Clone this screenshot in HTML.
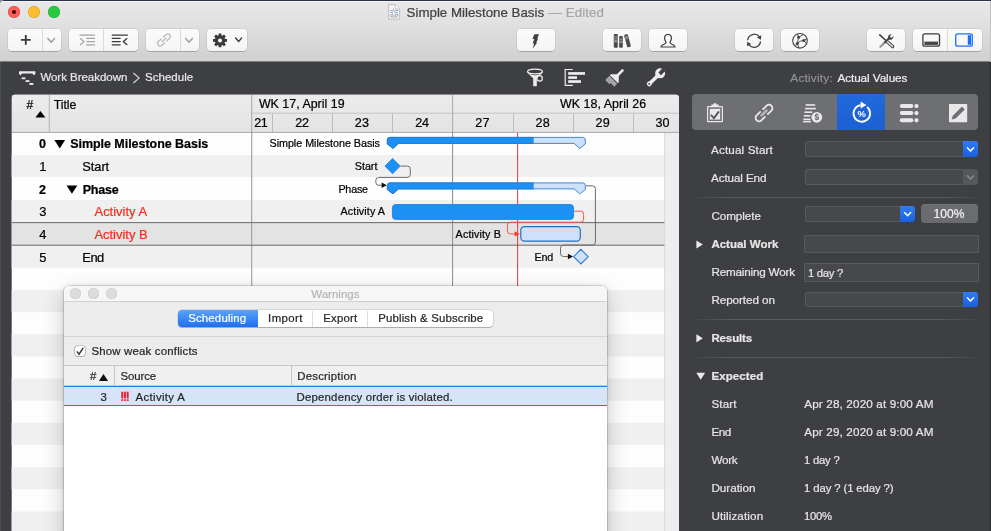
<!DOCTYPE html>
<html><head><meta charset="utf-8"><title>Simple Milestone Basis</title>
<style>
html,body{margin:0;padding:0}
body{width:991px;height:531px;overflow:hidden;position:relative;background:#3e3f43;font-family:"Liberation Sans",sans-serif}
.t{position:absolute;white-space:pre;line-height:20px;height:20px;-webkit-text-stroke:0.22px}
#txt{position:absolute;left:0;top:0;width:991px;height:531px;will-change:transform}
.abs{position:absolute}
#tb{left:0;top:0;width:991px;height:61px;background:linear-gradient(#e8e8e8,#e2e2e2 33%,#d0d0d0);border-bottom:1px solid #7e7e81;box-sizing:content-box}
.btn{position:absolute;top:29px;height:22px;background:linear-gradient(#fbfbfb,#f5f5f5);border-radius:4px;box-shadow:0 0 0 0.5px rgba(0,0,0,.13),0 0.8px 0.6px rgba(0,0,0,.24)}
.sep{position:absolute;top:0;width:1px;height:22px;background:#dadada}
.fld{position:absolute;background:#47484c;border:1px solid #58595d;box-sizing:border-box}
.pop{position:absolute;width:14.5px;background:linear-gradient(#2f7bf0,#1a5fe0);border-radius:0 3px 3px 0}
.hr{position:absolute;left:694px;width:283px;height:1px;background:linear-gradient(90deg,#434448,#58595d 12%,#58595d 88%,#434448)}
svg{position:absolute;overflow:visible}
</style></head><body>
<div id="tb" class="abs"></div>
<div class="abs" style="left:0;top:0;width:991px;height:1px;background:#27324a"></div><div class="abs" style="left:0;top:1px;width:991px;height:1px;background:#f5f5f5"></div>
<svg width="6" height="6" style="left:0;top:0"><path d="M0,0H4Q0.5,1.2 0,4Z" fill="#8a8f99"/></svg>
<div class="abs" style="left:990px;top:1px;width:1px;height:61px;background:#c2c2c2"></div>
<div class="abs" style="left:990px;top:62px;width:1px;height:469px;background:#2b2c2f"></div><div class="abs" style="left:989px;top:62px;width:1px;height:469px;background:#38393d"></div>
<div class="abs" style="left:0;top:62px;width:1px;height:469px;background:#4e4f53"></div>
<div class="abs" style="left:8px;top:6px;width:12px;height:12px;border-radius:6px;background:#fc5f57;box-shadow:inset 0 0 0 0.5px #e0443e"></div>
<div class="abs" style="left:28px;top:6px;width:12px;height:12px;border-radius:6px;background:#fdbc2e;box-shadow:inset 0 0 0 0.5px #dea123"></div>
<div class="abs" style="left:48px;top:6px;width:12px;height:12px;border-radius:6px;background:#28c840;box-shadow:inset 0 0 0 0.5px #1aab29"></div>
<div class="abs" style="left:12px;top:10px;width:4px;height:4px;border-radius:2px;background:#4d0000"></div>
<svg width="991" height="24" viewBox="0 0 991 24" style="left:0;top:0"><path d="M388.7,4.5H395.6L399.6,8.6V19.1H388.7Z" fill="#f5f5f5" stroke="#b9b9b9" stroke-width="0.9"/><path d="M395.4,4.6V8.8H399.5" fill="#fcfcfc" stroke="#bdbdbd" stroke-width="0.8"/><path d="M390.2,10.4H391.6M395.2,10.4H398.2M390.6,12.4H392M395.8,12.4H397.6M397,14.4H398.2" stroke="#4a90e0" stroke-width="0.9" fill="none"/><ellipse cx="394" cy="15.7" rx="3.9" ry="1.4" fill="#f8f8f8" stroke="#8c8c8c" stroke-width="0.8"/><path d="M392.2,15.4L393.3,8.8L395.8,15.4Z" fill="#fafafa" stroke="#9a9a9a" stroke-width="0.6"/></svg>
<div class="btn" style="left:8.0px;width:53.3px"><div class="sep" style="left:34.0px"></div></div>
<div class="btn" style="left:68.6px;width:69.6px"><div class="sep" style="left:34.4px"></div></div>
<div class="btn" style="left:145.6px;width:53.7px"><div class="sep" style="left:34.4px"></div></div>
<div class="btn" style="left:207.0px;width:40.2px"></div>
<div class="btn" style="left:516.8px;width:38.6px"></div>
<div class="btn" style="left:602.6px;width:38.9px"></div>
<div class="btn" style="left:648.5px;width:38.9px"></div>
<div class="btn" style="left:734.6px;width:38.8px"></div>
<div class="btn" style="left:780.5px;width:38.8px"></div>
<div class="btn" style="left:866.7px;width:38.5px"></div>
<div class="btn" style="left:912.7px;width:69.7px"><div class="sep" style="left:34.3px"></div></div>
<svg width="991" height="62" viewBox="0 0 991 62" style="left:0;top:0">
<path d="M20.9,39.9H30.7M25.8,35V44.8" stroke="#3b3b3b" stroke-width="1.9" fill="none"/>
<path d="M47.900000000000006,38.4L51.2,42.199999999999996L54.5,38.4" stroke="#a0a0a0" stroke-width="1.6" fill="none" stroke-linecap="round" stroke-linejoin="round"/>
<path d="M79.5,35.1H95.1M86.3,38.4H95.1M86.3,41.6H95.1M86.3,44.9H95.1" stroke="#a2a2a2" stroke-width="1.1" fill="none"/><path d="M80.2,38.2L83.8,41.6L80.2,45" stroke="#a2a2a2" stroke-width="1.2" fill="none"/>
<path d="M111.8,35.1H127.9M111.8,38.4H120.6M111.8,41.6H120.6M111.8,44.9H120.6" stroke="#3b3b3b" stroke-width="1.2" fill="none"/><path d="M127.2,38.2L123.4,41.6L127.2,45" stroke="#3b3b3b" stroke-width="1.4" fill="none"/>
<g transform="translate(164,39.9) rotate(-42) scale(0.74)" fill="none" stroke="#b8b8b8" stroke-width="1.6" stroke-linecap="round"><path d="M-2,-3.4H-7A3.4,3.4 0 0,0 -7,3.4H-2"/><path d="M2,-3.4H7A3.4,3.4 0 0,1 7,3.4H2"/><path d="M-4.2,0H4.2" stroke-width="2.4000000000000004" stroke-linecap="butt" opacity="0.75"/></g>
<path d="M185.7,38.4L189,42.199999999999996L192.3,38.4" stroke="#a4a4a4" stroke-width="1.6" fill="none" stroke-linecap="round" stroke-linejoin="round"/>
<path d="M226.97,39.06L226.97,41.74L224.86,41.96L224.53,42.73L225.88,44.38L223.98,46.28L222.33,44.93L221.56,45.26L221.34,47.37L218.66,47.37L218.44,45.26L217.67,44.93L216.02,46.28L214.12,44.38L215.47,42.73L215.14,41.96L213.03,41.74L213.03,39.06L215.14,38.84L215.47,38.07L214.12,36.42L216.02,34.52L217.67,35.87L218.44,35.54L218.66,33.43L221.34,33.43L221.56,35.54L222.33,35.87L223.98,34.52L225.88,36.42L224.53,38.07L224.86,38.84ZM222.0,40.4A2.0,2.0 0 1,0 218.0,40.4A2.0,2.0 0 1,0 222.0,40.4Z" fill="#3b3b3b" fill-rule="evenodd"/>
<path d="M235.6,38.0L238.6,41.599999999999994L241.6,38.0" stroke="#3b3b3b" stroke-width="1.4" fill="none" stroke-linecap="round" stroke-linejoin="round"/>
<path d="M534.3,34.2H539L537.3,38.6H538.1L536.2,43.1H537L532.5,48.7L534.2,43.6H532.6L534.3,39H532.5Z" fill="#404040"/>
<rect x="613.8" y="34.1" width="4" height="13.6" rx="1" fill="#4a4a4a"/><rect x="613.8" y="36.4" width="4" height="1" fill="#9a9a9a"/><rect x="613.8" y="38.4" width="4" height="1" fill="#9a9a9a"/><rect x="613.8" y="40" width="4" height="2.6" fill="#8a8a8a"/><rect x="619.1" y="36.1" width="3.7" height="11.6" rx="1" fill="#4a4a4a"/><rect x="619.1" y="38.6" width="3.7" height="1" fill="#9a9a9a"/><rect x="619.1" y="40.6" width="3.7" height="2.6" fill="#8a8a8a"/><g transform="translate(623.9,34.9) rotate(-15.5)"><rect x="0" y="0" width="3.8" height="13.2" rx="1" fill="#4a4a4a"/><rect x="0" y="1.6" width="3.8" height="3.4" fill="#858585"/></g>
<path d="M668,34.4C670.6,34.4 671.6,36.4 671.4,38.6C671.2,40.4 670.4,41.4 670,42.3C669.8,43.4 671.2,44 673,44.7C674.6,45.3 675,46 675,47H661C661,46 661.4,45.3 663,44.7C664.8,44 666.2,43.4 666,42.3C665.6,41.4 664.8,40.4 664.6,38.6C664.4,36.4 665.4,34.4 668,34.4Z" fill="none" stroke="#3b3b3b" stroke-width="1.2"/>
<g fill="none" stroke="#444" stroke-width="1.3"><path d="M747.7,40.2A6.5,6.5 0 0,1 759.4,36.9"/><path d="M760.5,41.4A6.5,6.5 0 0,1 748.8,44.7"/></g><path d="M761.3,35.3L760.9,39.8L756.9,37.6Z" fill="#444"/><path d="M746.9,46.3L747.3,41.8L751.3,44Z" fill="#444"/>
<g fill="none" stroke="#444" stroke-width="1.1"><circle cx="800" cy="40.8" r="7.3"/><path d="M798.6,37.2L797.3,43.6M797.3,43.6Q799.6,40.4 803.8,40.5M798.6,37.2L797.6,34M798.6,37.2L803.4,34.6M803.8,40.5L807,38.6M803.8,40.5L806.6,43.8M797.3,43.6L794.8,45.8M797.3,43.6L799,48" stroke-width="0.9"/></g><circle cx="798.6" cy="37.2" r="1.5" fill="#444"/><circle cx="803.8" cy="40.5" r="1.6" fill="#444"/><circle cx="797.3" cy="43.6" r="1.5" fill="#444"/>
<g fill="none" stroke-linecap="round"><path d="M880.4,46.8L884.6,42.6" stroke="#9c9c9c" stroke-width="2.3"/><path d="M884.8,42.4L888.8,38.4" stroke="#444" stroke-width="2"/><path d="M879.7,34.9L886.2,40.8" stroke="#3a3a3a" stroke-width="1.5"/><path d="M887.2,41.7L892.6,46.6" stroke="#444" stroke-width="3.4"/><path d="M887.4,41.9L892.4,46.4" stroke="#d8d8d8" stroke-width="1.5"/></g><path d="M888.2,38.9A3.3,3.3 0 0,1 891.6,34.3L889.8,36.4L891.3,37.9L893.4,36.1A3.3,3.3 0 0,1 888.8,39.5Z" fill="#444"/>
<rect x="922.9" y="33.8" width="16.6" height="12.4" rx="2" fill="none" stroke="#3b3b3b" stroke-width="1.3"/><rect x="924.4" y="41.6" width="13.6" height="3.3" fill="#444"/>
<rect x="955.7" y="33.8" width="16.6" height="12.4" rx="2" fill="none" stroke="#1a6ff5" stroke-width="1.3"/><rect x="967.8" y="35.2" width="3.2" height="9.6" fill="#1a6ff5"/>
</svg>
<svg id="main" width="991" height="531" viewBox="0 0 991 531" style="left:0;top:0">
<defs><linearGradient id="hg" x1="0" y1="0" x2="0" y2="1"><stop offset="0" stop-color="#ececec"/><stop offset="1" stop-color="#e3e3e3"/></linearGradient><clipPath id="tc"><path d="M11.7,531V97.7Q11.7,94.7 14.7,94.7H675.9Q678.9,94.7 678.9,97.7V531Z"/></clipPath></defs>
<g clip-path="url(#tc)">
<rect x="11" y="94" width="668" height="437" fill="#fdfdfd"/>
<rect x="11" y="155.10" width="653.4" height="21.85" fill="#f0f0f0"/>
<rect x="11" y="200.00" width="653.4" height="22.60" fill="#f0f0f0"/>
<rect x="11" y="222.60" width="653.4" height="22.60" fill="#e3e3e3"/>
<rect x="11" y="245.20" width="653.4" height="22.60" fill="#f0f0f0"/>
<rect x="11" y="289.95" width="653.4" height="22.15" fill="#f0f0f0"/>
<rect x="11" y="334.25" width="653.4" height="22.15" fill="#f0f0f0"/>
<rect x="11" y="378.55" width="653.4" height="22.15" fill="#f0f0f0"/>
<rect x="11" y="422.85" width="653.4" height="22.15" fill="#f0f0f0"/>
<rect x="11" y="467.15" width="653.4" height="22.15" fill="#f0f0f0"/>
<rect x="11" y="511.45" width="653.4" height="22.15" fill="#f0f0f0"/>
<rect x="664.2" y="132.4" width="15" height="400" fill="#eeeeee"/><rect x="664.2" y="132.4" width="1" height="400" fill="#d9d9d9"/>
<rect x="12" y="94" width="667" height="38.4" fill="url(#hg)"/>
<rect x="12" y="131.9" width="667" height="1" fill="#a9a9a9"/>
<rect x="252" y="112.7" width="427" height="1" fill="#c4c4c4"/>
<rect x="48.8" y="94" width="1" height="38" fill="#b4b4b4"/>
<rect x="272" y="113.5" width="1" height="18.5" fill="#bcbcbc"/>
<rect x="332" y="113.5" width="1" height="18.5" fill="#bcbcbc"/>
<rect x="392" y="113.5" width="1" height="18.5" fill="#bcbcbc"/>
<rect x="513" y="113.5" width="1" height="18.5" fill="#bcbcbc"/>
<rect x="573" y="113.5" width="1" height="18.5" fill="#bcbcbc"/>
<rect x="633" y="113.5" width="1" height="18.5" fill="#bcbcbc"/>
<rect x="452.1" y="94" width="1" height="38" fill="#a8a8a8"/><rect x="452.1" y="132" width="1" height="400" fill="#8c8c8c"/>
<rect x="251.2" y="94" width="1" height="38" fill="#a4a4a4"/><rect x="251.2" y="132" width="1" height="400" fill="#979797"/>
<rect x="11" y="222.05" width="653.4" height="1.1" fill="#747474"/>
<rect x="11" y="244.65" width="653.4" height="1.1" fill="#747474"/>
<rect x="517.1" y="132.9" width="1" height="400" fill="#df3a3c"/>
</g>
<clipPath id="c137"><rect x="380" y="135.4" width="153.7" height="20"/></clipPath><path d="M389.90000000000003,137.4H582.6999999999999Q585.3,137.4 585.3,140.0V144.0L579.5999999999999,148.4L574.0999999999999,143.4H398.5L393.0,148.4L387.3,144.0V140.0Q387.3,137.4 389.90000000000003,137.4Z" fill="#cfe0fa" stroke="#2a7fd6" stroke-width="0.9"/><path d="M389.90000000000003,137.4H582.6999999999999Q585.3,137.4 585.3,140.0V144.0L579.5999999999999,148.4L574.0999999999999,143.4H398.5L393.0,148.4L387.3,144.0V140.0Q387.3,137.4 389.90000000000003,137.4Z" fill="#1d90f5" stroke="#1b7ad6" stroke-width="0.8" clip-path="url(#c137)"/>
<clipPath id="c182"><rect x="380" y="180.9" width="153.7" height="20"/></clipPath><path d="M389.90000000000003,182.9H582.6999999999999Q585.3,182.9 585.3,185.5V189.5L579.5999999999999,193.9L574.0999999999999,188.9H398.5L393.0,193.9L387.3,189.5V185.5Q387.3,182.9 389.90000000000003,182.9Z" fill="#cfe0fa" stroke="#2a7fd6" stroke-width="0.9"/><path d="M389.90000000000003,182.9H582.6999999999999Q585.3,182.9 585.3,185.5V189.5L579.5999999999999,193.9L574.0999999999999,188.9H398.5L393.0,193.9L387.3,189.5V185.5Q387.3,182.9 389.90000000000003,182.9Z" fill="#1d90f5" stroke="#1b7ad6" stroke-width="0.8" clip-path="url(#c182)"/>
<path d="M400.6,166.1H407.3Q410.3,166.1 410.3,169.1V174.4Q410.3,177.4 407.3,177.4H378.8Q375.8,177.4 375.8,180.4V182.3Q375.8,185.3 378.8,185.3H383" fill="none" stroke="#6a6a6a" stroke-width="1"/>
<path d="M386.8,185.3L381.6,182.6V188Z" fill="#111"/>
<path d="M585.7,185.8H592.4Q595.4,185.8 595.4,188.8V242.1Q595.4,245.1 592.4,245.1H563.5Q560.5,245.1 560.5,248.1V253.5Q560.5,256.5 563.5,256.5H568.5" fill="none" stroke="#6a6a6a" stroke-width="1"/>
<path d="M573.1,256.5L567.9,253.8V259.2Z" fill="#111"/>
<path d="M574,211.2H580.6Q583.6,211.2 583.6,214.2V219.2Q583.6,222.2 580.6,222.2H510.4Q507.4,222.2 507.4,225.2V230.9Q507.4,233.9 510.4,233.9H515" fill="none" stroke="#f4574a" stroke-width="1"/>
<path d="M519.8,233.9L514.6,231.2V236.6Z" fill="#f5392f"/>
<path d="M392.6,158.4L400.3,166.1L392.6,173.8L384.9,166.1Z" fill="#1d90f5" stroke="#1b7ad6" stroke-width="0.7"/>
<rect x="392.4" y="204.5" width="181.2" height="14.9" rx="3.4" fill="#1d90f5" stroke="#1b7ad6" stroke-width="0.8"/>
<rect x="520.8" y="226.6" width="59.5" height="14.5" rx="3.6" fill="#cfe0fa" stroke="#1f72c4" stroke-width="1.2"/>
<path d="M580.9,249.4L588.2,256.7L580.9,264L573.6,256.7Z" fill="#cfe0fa" stroke="#2a7fd0" stroke-width="1.1"/>
<path d="M35.4,117.6L40.4,110.9L45.4,117.6Z" fill="#000"/>
<path d="M54.4,140.1H65.1L59.75,148.4Z" fill="#000"/>
<path d="M66.6,185.5H77.3L71.95,193.8Z" fill="#000"/>
</svg>
<svg width="991" height="531" viewBox="0 0 991 531" style="left:0;top:0;pointer-events:none">
<path d="M19.6,71.2H34.8Q35.4,71.2 35.4,71.8V74L33.8,75.2L32.4,73.4H22L20.6,75.2L19,74V71.8Q19,71.2 19.6,71.2Z" fill="#ececec"/><rect x="21.6" y="77.4" width="3.8" height="1.8" fill="#ececec"/><rect x="25.6" y="80.2" width="3.8" height="1.8" fill="#ececec"/><rect x="29.4" y="83" width="3.9" height="1.9" fill="#ececec"/>
<path d="M133.4,73L139.2,78L133.4,83" stroke="#d8d8d8" stroke-width="1.1" fill="none"/>
<ellipse cx="535" cy="71.5" rx="7.4" ry="2.3" fill="none" stroke="#ececec" stroke-width="1.3"/><path d="M527.6,72.2L533.8,78V85.8H536.2V78L542.4,72.2" fill="none" stroke="#ececec" stroke-width="1.1"/><path d="M529.6,74.6Q535,76 540.4,74.6L536.2,78.4V85.8H533.8V78.4Z" fill="#ececec"/><circle cx="539.6" cy="78.4" r="2.7" fill="none" stroke="#ececec" stroke-width="1.2"/>
<path d="M572.8,69.5H565.2V85.3H572.8" fill="none" stroke="#ececec" stroke-width="1.2"/><rect x="568.2" y="72.1" width="16.8" height="2.7" fill="#ececec"/><rect x="568.2" y="76.3" width="8.8" height="2.6" fill="#ececec"/><rect x="568.2" y="80.2" width="12.8" height="2.7" fill="#ececec"/>
<g transform="translate(615.5,77.5) rotate(45)"><rect x="-1.3" y="-11.2" width="2.6" height="9.6" rx="1.2" fill="#ececec"/><path d="M-1.3,-3.4L-5.6,1V2.3H5.6V1L1.3,-3.4Z" fill="#ececec"/><path d="M-5.6,3.2H5.6V7.4H0.4V9H-5.6Z" fill="#a3a4a6"/></g>
<g transform="translate(654.8,78.5) rotate(46)"><rect x="-1.8" y="-5.5" width="3.6" height="13" fill="#ececec"/><circle cx="0" cy="7.6" r="2.5" fill="#ececec"/><circle cx="0" cy="-7.4" r="5" fill="#ececec"/><rect x="-1.9" y="-13" width="3.8" height="6.2" fill="#3e3f43"/><circle cx="0" cy="7.8" r="0.95" fill="#3e3f43"/></g>
</svg>
<div class="abs" style="left:63.6px;top:286px;width:543.4px;height:260px;border-radius:5px 5px 0 0;background:#ffffff;box-shadow:0 0 0 0.6px rgba(0,0,0,.22),0 8px 22px rgba(0,0,0,.21),0 0 5px rgba(0,0,0,.10);overflow:hidden">
<div class="abs" style="left:0;top:0;width:100%;height:16px;background:#f6f6f6"></div>
<div class="abs" style="left:0;top:15px;width:100%;height:1px;background:#d0d0d0"></div>
<div class="abs" style="left:0;top:16px;width:100%;height:64px;background:#ececec"></div>
<div class="abs" style="left:6.5px;top:2.1px;width:10.8px;height:10.8px;border-radius:6px;background:#dcdcdc;box-shadow:inset 0 0 0 0.6px #cdcdcd"></div>
<div class="abs" style="left:24.5px;top:2.1px;width:10.8px;height:10.8px;border-radius:6px;background:#dcdcdc;box-shadow:inset 0 0 0 0.6px #cdcdcd"></div>
<div class="abs" style="left:42.5px;top:2.1px;width:10.8px;height:10.8px;border-radius:6px;background:#dcdcdc;box-shadow:inset 0 0 0 0.6px #cdcdcd"></div>
<div class="abs" style="left:0;top:50px;width:100%;height:1px;background:#d4d4d4"></div>
<div class="abs" style="left:0;top:79px;width:100%;height:21px;background:#f0f0f0;border-top:1px solid #c6c6c6;border-bottom:1px solid #c9c9c9;box-sizing:border-box"></div>
<div class="abs" style="left:50.4px;top:79.4px;width:1px;height:20px;background:#c4c4c4"></div>
<div class="abs" style="left:227.6px;top:79.4px;width:1px;height:20px;background:#c4c4c4"></div>
<div class="abs" style="left:0;top:100px;width:100%;height:19.6px;background:#d5e5f7;border-top:1px solid #2b7bd8;border-bottom:1px solid #2b7bd8;box-sizing:border-box"></div>
</div>
<div class="abs" style="left:177.9px;top:310.2px;width:315.6px;height:17.2px;border-radius:4px;background:#ffffff;box-shadow:0 0 0 0.5px rgba(0,0,0,.18),0 0.8px 0.6px rgba(0,0,0,.25)"></div>
<div class="abs" style="left:177.9px;top:310.2px;width:80.3px;height:17.2px;border-radius:4px 0 0 4px;background:linear-gradient(#5ba2f8,#1e70f2)"></div>
<div class="abs" style="left:312px;top:311px;width:1px;height:16px;background:#dcdcdc"></div>
<div class="abs" style="left:367.2px;top:311px;width:1px;height:16px;background:#dcdcdc"></div>
<div class="abs" style="left:74.6px;top:345.8px;width:10.7px;height:10.7px;border-radius:2.5px;background:#ffffff;box-shadow:0 0 0 0.6px rgba(0,0,0,.35),0 0.6px 0.5px rgba(0,0,0,.2)"></div>
<svg width="991" height="531" viewBox="0 0 991 531" style="left:0;top:0"><path d="M76.8,351.4L79,354.2L83.2,347.8" fill="none" stroke="#333" stroke-width="1.4"/>
<path d="M98.9,380.9L103.5,374.1L108.1,380.9Z" fill="#111"/>
<rect x="121.25" y="391.7" width="1.9" height="6.7" fill="#ee1c2e"/><rect x="121.25" y="399.3" width="1.9" height="1.6" fill="#ee1c2e"/>
<rect x="124.00" y="391.7" width="1.9" height="6.7" fill="#ee1c2e"/><rect x="124.00" y="399.3" width="1.9" height="1.6" fill="#ee1c2e"/>
<rect x="126.75" y="391.7" width="1.9" height="6.7" fill="#ee1c2e"/><rect x="126.75" y="399.3" width="1.9" height="1.6" fill="#ee1c2e"/>
</svg>
<div class="abs" style="left:692px;top:94.1px;width:286px;height:36px;border-radius:4px;background:#6e6f73;overflow:hidden"><div class="abs" style="left:145px;top:0;width:48px;height:36px;background:linear-gradient(#2169de,#1c60d2)"></div></div>
<div class="fld" style="left:804.6px;top:141.4px;width:159.2px;height:15.4px;border-radius:2px 0 0 2px"></div>
<div class="pop" style="left:963.3px;top:141.4px;height:15.4px;background:linear-gradient(#2f7cf2,#1a60e0)"></div>
<div class="fld" style="left:804.6px;top:169.4px;width:159.2px;height:15.4px;border-radius:2px 0 0 2px"></div>
<div class="pop" style="left:963.3px;top:169.4px;height:15.4px;background:#56575b"></div>
<div class="fld" style="left:804.6px;top:206.2px;width:96.3px;height:15.4px;border-radius:2px 0 0 2px"></div>
<div class="pop" style="left:900.4px;top:206.2px;height:15.4px;background:linear-gradient(#2f7cf2,#1a60e0)"></div>
<div class="fld" style="left:804.6px;top:291.6px;width:159.2px;height:15.2px;border-radius:2px 0 0 2px"></div>
<div class="pop" style="left:963.3px;top:291.6px;height:15.2px;background:linear-gradient(#2f7cf2,#1a60e0)"></div>
<div class="abs" style="left:921px;top:204.2px;width:57.2px;height:18.8px;border-radius:4px;background:#6b6c6f;box-shadow:inset 0 0.6px 0 rgba(255,255,255,.12)"></div>
<div class="fld" style="left:804px;top:234.6px;width:174.8px;height:18.8px"></div>
<div class="fld" style="left:804px;top:263.4px;width:174.8px;height:18.2px"></div>
<div class="hr" style="top:197.2px"></div>
<div class="hr" style="top:319px"></div>
<div class="hr" style="top:356.8px"></div>
<svg width="991" height="531" viewBox="0 0 991 531" style="left:0;top:0;will-change:transform">
<path d="M967.4,147.7L970.5,150.89999999999998L973.6,147.7" fill="none" stroke="#fff" stroke-width="1.5" stroke-linecap="round" stroke-linejoin="round"/>
<path d="M967.4,175.7L970.5,178.89999999999998L973.6,175.7" fill="none" stroke="#8a8b8e" stroke-width="1.5" stroke-linecap="round" stroke-linejoin="round"/>
<path d="M904.5,212.5L907.6,215.7L910.7,212.5" fill="none" stroke="#fff" stroke-width="1.5" stroke-linecap="round" stroke-linejoin="round"/>
<path d="M967.4,297.8L970.5,301.0L973.6,297.8" fill="none" stroke="#fff" stroke-width="1.5" stroke-linecap="round" stroke-linejoin="round"/>
<path d="M696.4,240.4L702.8,244.5L696.4,248.6Z" fill="#e9e9e9"/>
<path d="M696.4,334.2L702.8,338.3L696.4,342.4Z" fill="#e9e9e9"/>
<path d="M696.3,372.8H705.1L700.7,379.8Z" fill="#e9e9e9"/>
<g fill="none" stroke="#e9e9e9" stroke-width="1.2"><rect x="707.6" y="106.6" width="14.8" height="15" rx="0.6"/><rect x="709.8" y="108.8" width="10.4" height="10.8" fill="#e9e9e9" stroke="none"/><path d="M711.4,106.4V104.6H713.4A1.6,1.6 0 0,1 716.6,104.6H718.6V106.4Z" fill="#e9e9e9" stroke="none"/></g><path d="M710.9,114.8L713.9,118.1L719,111.3" fill="none" stroke="#5a5b5f" stroke-width="2"/>
<g transform="translate(764,113) rotate(-44)" fill="none" stroke="#e9e9e9" stroke-width="1.75" stroke-linecap="round"><path d="M-2,-3.4H-7A3.4,3.4 0 0,0 -7,3.4H-2"/><path d="M2,-3.4H7A3.4,3.4 0 0,1 7,3.4H2"/><path d="M-4.4,0H4.4" stroke="#b4b5b8" stroke-width="2.5" stroke-linecap="butt"/></g>
<g fill="#e9e9e9"><rect x="805.6" y="104.2" width="9.6" height="1.6"/><rect x="805" y="107.8" width="10.8" height="1.6"/><rect x="804.4" y="111.4" width="8" height="1.6"/><rect x="803.8" y="115" width="7" height="1.6"/><rect x="803.2" y="118.6" width="7.4" height="1.6"/><rect x="803" y="121" width="8" height="1.4"/><circle cx="816.8" cy="117.3" r="6.5" fill="#6e6f73"/><circle cx="816.8" cy="117.3" r="5.4"/></g><text x="816.8" y="120.3" font-size="8.4" font-weight="700" text-anchor="middle" fill="#606165" font-family="Liberation Sans">$</text>
<path d="M867.1,107.0A8.3,8.3 0 1,1 860.6,105.2" fill="none" stroke="#fff" stroke-width="1.8"/><path d="M860.6,101.4L866.4,104.9L860.6,108.6Z" fill="#fff"/><text x="861.7" y="116.8" font-size="9.4" font-weight="700" text-anchor="middle" fill="#fff" font-family="Liberation Sans">%</text>
<rect x="899.8" y="104" width="13.6" height="4" rx="2" fill="#e9e9e9"/><rect x="914.5" y="104" width="3.9" height="4" rx="1.5" fill="#e9e9e9"/>
<rect x="899.8" y="111.1" width="13.6" height="4" rx="2" fill="#e9e9e9"/><rect x="914.5" y="111.1" width="3.9" height="4" rx="1.5" fill="#e9e9e9"/>
<rect x="899.8" y="118.2" width="13.6" height="4" rx="2" fill="#e9e9e9"/><rect x="914.5" y="118.2" width="3.9" height="4" rx="1.5" fill="#e9e9e9"/>
<rect x="949" y="104" width="18.2" height="18.2" rx="0.8" fill="#e9e9e9"/><path d="M951.6,119.6L952.8,115.8L962,106.6L964.8,109.4L955.6,118.6Z" fill="#6e6f73"/>
</svg>
<div id="txt">
<span class="t" style="left:406.6px;top:2.69px;font-size:13.3px;color:#404040;">Simple Milestone Basis</span>
<span class="t" style="left:548.6px;top:2.69px;font-size:13.3px;color:#a5a5a5;letter-spacing:0.10px;">— Edited</span>
<span class="t" style="left:40.4px;top:67.02px;font-size:11.5px;color:#e8e8e8;letter-spacing:-0.03px;">Work Breakdown</span>
<span class="t" style="left:145.0px;top:67.02px;font-size:11.5px;color:#e8e8e8;letter-spacing:0.03px;">Schedule</span>
<span class="t" style="left:790.3px;top:67.91px;font-size:11.8px;color:#909195;letter-spacing:0.22px;">Activity:</span>
<span class="t" style="left:837.4px;top:67.91px;font-size:11.8px;color:#ececec;letter-spacing:-0.10px;">Actual Values</span>
<span class="t" style="left:26.6px;top:95.34px;font-size:12px;color:#000;letter-spacing:-0.07px;">#</span>
<span class="t" style="left:53.7px;top:95.34px;font-size:12.3px;color:#000;letter-spacing:-0.02px;">Title</span>
<span class="t" style="left:258.9px;top:93.90px;font-size:12.4px;color:#000;letter-spacing:0.02px;">WK 17, April 19</span>
<span class="t" style="left:560.0px;top:93.90px;font-size:12.4px;color:#000;letter-spacing:0.05px;">WK 18, April 26</span>
<span class="t" style="left:254.2px;top:112.53px;font-size:12.6px;color:#000;letter-spacing:-0.50px;">21</span>
<span class="t" style="left:295.3px;top:112.53px;font-size:12.6px;color:#000;letter-spacing:-0.32px;">22</span>
<span class="t" style="left:354.8px;top:112.53px;font-size:12.6px;color:#000;letter-spacing:0.18px;">23</span>
<span class="t" style="left:415.2px;top:112.53px;font-size:12.6px;color:#000;letter-spacing:-0.22px;">24</span>
<span class="t" style="left:475.3px;top:112.53px;font-size:12.6px;color:#000;letter-spacing:0.28px;">27</span>
<span class="t" style="left:535.5px;top:112.53px;font-size:12.6px;color:#000;letter-spacing:0.18px;">28</span>
<span class="t" style="left:595.5px;top:112.53px;font-size:12.6px;color:#000;letter-spacing:0.18px;">29</span>
<span class="t" style="left:655.4px;top:112.53px;font-size:12.6px;color:#000;letter-spacing:0.18px;">30</span>
<span class="t" style="left:39.0px;top:133.97px;font-size:12.5px;font-weight:700;color:#000;letter-spacing:0.50px;">0</span>
<span class="t" style="left:70.2px;top:133.97px;font-size:12.5px;font-weight:700;color:#000;letter-spacing:-0.04px;">Simple Milestone Basis</span>
<span class="t" style="left:39.3px;top:156.53px;font-size:12.9px;color:#000;letter-spacing:0.02px;">1</span>
<span class="t" style="left:82.3px;top:156.53px;font-size:12.9px;color:#000;letter-spacing:-0.09px;">Start</span>
<span class="t" style="left:39.0px;top:179.97px;font-size:12.5px;font-weight:700;color:#000;letter-spacing:0.50px;">2</span>
<span class="t" style="left:82.7px;top:179.97px;font-size:12.5px;font-weight:700;color:#000;letter-spacing:-0.18px;">Phase</span>
<span class="t" style="left:39.3px;top:201.83px;font-size:12.9px;color:#000;letter-spacing:0.02px;">3</span>
<span class="t" style="left:94.5px;top:201.83px;font-size:12.9px;color:#fb2b1d;letter-spacing:0.03px;">Activity A</span>
<span class="t" style="left:39.3px;top:225.23px;font-size:12.9px;color:#000;letter-spacing:0.02px;">4</span>
<span class="t" style="left:94.5px;top:225.23px;font-size:12.9px;color:#fb2b1d;">Activity B</span>
<span class="t" style="left:39.3px;top:247.83px;font-size:12.9px;color:#000;letter-spacing:0.02px;">5</span>
<span class="t" style="left:82.3px;top:247.83px;font-size:12.9px;color:#000;letter-spacing:-0.50px;">End</span>
<span class="t" style="left:269.5px;top:133.28px;font-size:10.75px;color:#000;letter-spacing:-0.03px;">Simple Milestone Basis</span>
<span class="t" style="left:354.8px;top:156.38px;font-size:10.75px;color:#000;letter-spacing:-0.03px;">Start</span>
<span class="t" style="left:338.4px;top:179.28px;font-size:10.75px;color:#000;letter-spacing:-0.20px;">Phase</span>
<span class="t" style="left:340.6px;top:201.48px;font-size:10.75px;color:#000;letter-spacing:0.09px;">Activity A</span>
<span class="t" style="left:455.6px;top:224.28px;font-size:10.75px;color:#000;letter-spacing:0.12px;">Activity B</span>
<span class="t" style="left:534.6px;top:246.98px;font-size:10.75px;color:#000;letter-spacing:-0.21px;">End</span>
<span class="t" style="left:311.3px;top:284.42px;font-size:11.5px;color:#b4b4b4;">Warnings</span>
<span class="t" style="left:188.2px;top:308.35px;font-size:11.4px;color:#ffffff;letter-spacing:0.18px;">Scheduling</span>
<span class="t" style="left:268.1px;top:308.35px;font-size:11.4px;color:#262626;letter-spacing:0.40px;">Import</span>
<span class="t" style="left:323.3px;top:308.35px;font-size:11.4px;color:#262626;letter-spacing:0.21px;">Export</span>
<span class="t" style="left:378.2px;top:308.35px;font-size:11.4px;color:#262626;letter-spacing:0.17px;">Publish &amp; Subscribe</span>
<span class="t" style="left:91.4px;top:341.35px;font-size:11.4px;color:#262626;letter-spacing:0.20px;">Show weak conflicts</span>
<span class="t" style="left:90.0px;top:366.35px;font-size:11.4px;color:#262626;letter-spacing:0.50px;">#</span>
<span class="t" style="left:120.4px;top:366.35px;font-size:11.4px;color:#262626;letter-spacing:-0.06px;">Source</span>
<span class="t" style="left:297.3px;top:366.35px;font-size:11.4px;color:#262626;letter-spacing:0.20px;">Description</span>
<span class="t" style="left:100.4px;top:387.05px;font-size:11.4px;color:#262626;letter-spacing:0.16px;">3</span>
<span class="t" style="left:135.6px;top:387.05px;font-size:11.4px;color:#262626;letter-spacing:0.34px;">Activity A</span>
<span class="t" style="left:296.6px;top:387.05px;font-size:11.4px;color:#262626;letter-spacing:0.19px;">Dependency order is violated.</span>
<span class="t" style="left:711.1px;top:140.25px;font-size:11.7px;color:#e6e6e6;letter-spacing:0.12px;">Actual Start</span>
<span class="t" style="left:711.1px;top:167.95px;font-size:11.7px;color:#e6e6e6;letter-spacing:-0.13px;">Actual End</span>
<span class="t" style="left:711.4px;top:205.85px;font-size:11.7px;color:#e6e6e6;letter-spacing:-0.07px;">Complete</span>
<span class="t" style="left:933.6px;top:203.84px;font-size:12px;color:#f2f2f2;letter-spacing:0.04px;">100%</span>
<span class="t" style="left:711.4px;top:234.12px;font-size:11.5px;font-weight:700;color:#e6e6e6;">Actual Work</span>
<span class="t" style="left:711.4px;top:262.35px;font-size:11.7px;color:#e6e6e6;letter-spacing:-0.19px;">Remaining Work</span>
<span class="t" style="left:808.0px;top:263.38px;font-size:11.3px;color:#e6e6e6;letter-spacing:-0.31px;">1 day ?</span>
<span class="t" style="left:711.4px;top:290.25px;font-size:11.7px;color:#e6e6e6;letter-spacing:-0.07px;">Reported on</span>
<span class="t" style="left:711.4px;top:328.32px;font-size:11.5px;font-weight:700;color:#e6e6e6;letter-spacing:-0.12px;">Results</span>
<span class="t" style="left:711.4px;top:366.02px;font-size:11.5px;font-weight:700;color:#e6e6e6;letter-spacing:0.10px;">Expected</span>
<span class="t" style="left:711.4px;top:394.25px;font-size:11.7px;color:#e6e6e6;letter-spacing:0.10px;">Start</span>
<span class="t" style="left:804.3px;top:394.25px;font-size:11.7px;color:#e6e6e6;letter-spacing:0.14px;">Apr 28, 2020 at 9:00 AM</span>
<span class="t" style="left:711.4px;top:421.85px;font-size:11.7px;color:#e6e6e6;letter-spacing:-0.50px;">End</span>
<span class="t" style="left:804.3px;top:421.85px;font-size:11.7px;color:#e6e6e6;letter-spacing:0.14px;">Apr 29, 2020 at 9:00 AM</span>
<span class="t" style="left:711.4px;top:449.85px;font-size:11.7px;color:#e6e6e6;letter-spacing:-0.26px;">Work</span>
<span class="t" style="left:804.1px;top:449.98px;font-size:11.3px;color:#e6e6e6;letter-spacing:-0.24px;">1 day ?</span>
<span class="t" style="left:711.4px;top:478.15px;font-size:11.7px;color:#e6e6e6;letter-spacing:-0.02px;">Duration</span>
<span class="t" style="left:804.1px;top:478.28px;font-size:11.3px;color:#e6e6e6;letter-spacing:-0.10px;">1 day ? (1 eday ?)</span>
<span class="t" style="left:711.4px;top:506.05px;font-size:11.7px;color:#e6e6e6;letter-spacing:0.11px;">Utilization</span>
<span class="t" style="left:804.1px;top:506.18px;font-size:11.3px;color:#e6e6e6;letter-spacing:-0.33px;">100%</span>
</div>
</body></html>
